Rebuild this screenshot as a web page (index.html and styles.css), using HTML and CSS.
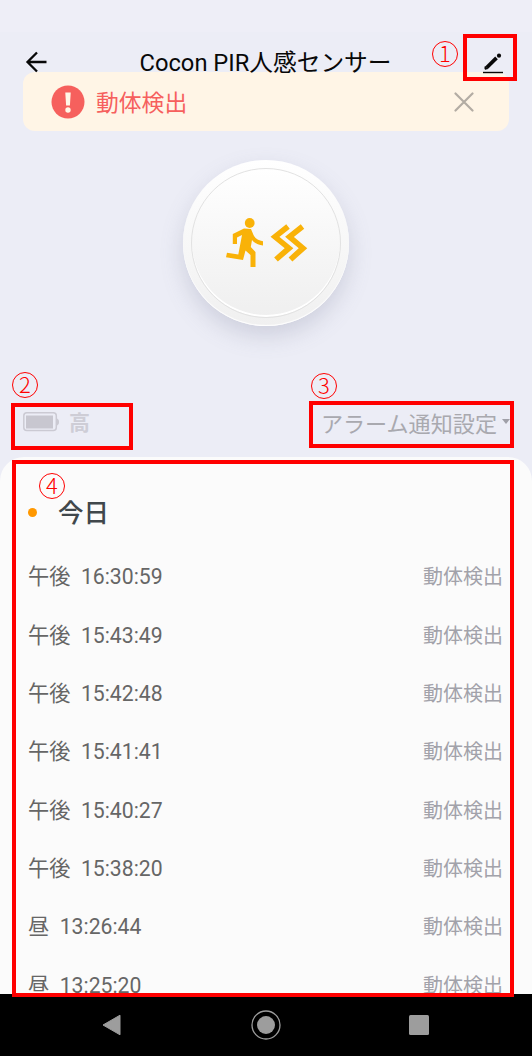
FILE: index.html
```html
<!DOCTYPE html>
<html lang="ja">
<head>
<meta charset="utf-8">
<title>Cocon PIR人感センサー</title>
<link rel="stylesheet" href="styles.css">
</head>
<body>
<div class="screen">
  <div class="status-bar"></div>
  <header class="header">
    <svg class="back" width="22" height="22" viewBox="0 0 22 22"><path d="M21.500 11H2.500M12 1.500L2.500 11l9.500 9.500" fill="none" stroke="#080808" stroke-width="2.300"/></svg>
    <h1 class="title">Cocon PIR人感センサー</h1>
    <svg class="edit" width="22" height="22" viewBox="0 0 22 22"><path d="M4.800 15.500L14.500 5.800" stroke="#080808" stroke-width="3.800"/><path d="M3 17.200v-2.700l2.700 2.200z" fill="#080808" stroke="#080808"/><circle cx="17" cy="3.700" r="2.100" fill="#080808"/><path d="M1 20.500h20" stroke="#080808" stroke-width="1.400"/></svg>
  </header>
  <section class="banner">
    <svg width="34" height="34" viewBox="0 0 34 34"><circle cx="17" cy="17" r="16.500" fill="#f6605d"/><path d="M14.300 7.500h5.400l-.8 13h-3.800z" fill="#fff6e7"/><circle cx="17" cy="25" r="2.700" fill="#fff6e7"/></svg>
    <span class="banner-text">動体検出</span>
    <svg class="close" width="20" height="20" viewBox="0 0 20 20"><path d="M1.500 1.500l17 17M18.500 1.500l-17 17" stroke="#b3aca3" stroke-width="2.200" stroke-linecap="round"/></svg>
  </section>
  <section class="sensor">
    <div class="dial">
      <div class="dial-face">
        <svg width="84" height="52" viewBox="0 0 84 52" fill="none" stroke="#f9b208">
          <circle cx="25.700" cy="6" r="4.900" fill="#f9b208" stroke="none"/>
          <path d="M20 11.500l7 .5 2.500 6c1.500 3.500 5 5.500 9.500 6.200v4.200c-5-.5-8.500-2.300-11-5.500l-1.200 7.200 4.700 5V50h-5V38l-5-4.500-2.500 9.500-17-2.800 1-4.500 11.300 1.800 3.700-19.500-5 2.500v6.500H8.800v-10z" fill="#f9b208" stroke="none"/>
          <path d="M64 9.500L51 19.800 65 31.200 52 42.500M78.500 9.500L65.500 19.800 79 31.200 66.500 42.500" stroke-width="5.600"/>
        </svg>
      </div>
    </div>
  </section>
  <section class="info">
    <div class="battery">
      <svg width="36" height="20" viewBox="0 0 36 20"><rect x=".8" y=".8" width="32.500" height="17.800" rx="3" fill="none" stroke="#cbcad3" stroke-width="1.500"/><rect x="3" y="3.500" width="27" height="13" fill="#c8c7d0"/><path d="M34 7c2 0 2 6 0 6z" fill="#cbcad3" stroke="#cbcad3"/></svg>
      <span class="level">高</span>
    </div>
    <div class="alarm"><span>アラーム通知設定</span><i class="caret"></i></div>
  </section>
  <main class="sheet">
    <h2 class="day"><i class="dot"></i><span>今日</span></h2>
    <ul class="events">
      <li><span class="time">午後  16:30:59</span><span class="event">動体検出</span></li>
      <li><span class="time">午後  15:43:49</span><span class="event">動体検出</span></li>
      <li><span class="time">午後  15:42:48</span><span class="event">動体検出</span></li>
      <li><span class="time">午後  15:41:41</span><span class="event">動体検出</span></li>
      <li><span class="time">午後  15:40:27</span><span class="event">動体検出</span></li>
      <li><span class="time">午後  15:38:20</span><span class="event">動体検出</span></li>
      <li><span class="time">昼  13:26:44</span><span class="event">動体検出</span></li>
      <li><span class="time">昼  13:25:20</span><span class="event">動体検出</span></li>
    </ul>
  </main>
  <nav class="nav">
    <svg width="20" height="22" viewBox="0 0 20 22"><path d="M1 11L18 1.200v19.600z" fill="#9d9d9d" stroke="#9d9d9d" stroke-linejoin="round"/></svg>
    <svg width="30" height="30" viewBox="0 0 30 30"><circle cx="15" cy="15" r="14" fill="none" stroke="#9d9d9d" stroke-width="1.300"/><circle cx="15" cy="15" r="9" fill="#9d9d9d"/></svg>
    <svg width="20" height="20" viewBox="0 0 20 20"><rect width="20" height="20" rx="1.500" fill="#9d9d9d"/></svg>
  </nav>
  <div class="mark mark-edit"></div><span class="num num-edit">1</span>
  <div class="mark mark-battery"></div><span class="num num-battery">2</span>
  <div class="mark mark-alarm"></div><span class="num num-alarm">3</span>
  <div class="mark mark-log"></div><span class="num num-log">4</span>
</div>
</body>
</html>
```
FILE: styles.css
```css
* { box-sizing: border-box; margin: 0; padding: 0; }
body { font-family: Roboto, "Noto Sans CJK JP", sans-serif; }
svg { display: block; flex: none; }
.screen {
  position: relative;
  display: flex;
  flex-direction: column;
  width: 532px;
  height: 1056px;
  overflow: hidden;
  background: #ecedf6;
}
.status-bar { height: 32px; background: #eeeef7; flex: none; }
.header {
  display: flex;
  align-items: center;
  justify-content: space-between;
  height: 40px;
  padding: 19px 28px 0 25px;
  flex: none;
}
.header .edit { margin-top: 3px; }
.title {
  padding: 2px 0 0 2px;
  font-size: 23.700px;
  font-weight: 400;
  line-height: 30px;
  color: #080808;
  z-index: 1;
}
.header svg { z-index: 1; }
.banner {
  display: flex;
  align-items: center;
  height: 59px;
  margin: 0 23px;
  padding: 0 35px 0 28px;
  border-radius: 12px;
  background: #fff5e6;
  flex: none;
}
.banner-text { padding-top: 4px; margin-left: 11px; font-size: 22.8px; line-height: 30px; color: #f6605d; }
.close { margin-left: auto; }
.sensor { display: flex; justify-content: center; height: 263px; padding-top: 29px; flex: none; }
.dial {
  width: 166px;
  height: 166px;
  padding: 8px;
  border-radius: 50%;
  background: linear-gradient(#fff, #f0f0f0);
  box-shadow: 0 10px 22px rgba(120, 122, 150, .25), inset 0 -1px 1px #fff;
}
.dial-face {
  display: flex;
  align-items: center;
  justify-content: center;
  height: 150px;
  border: 1px solid #e2e2e2;
  border-radius: 50%;
  background: linear-gradient(#fff, #efefef);
  box-shadow: inset 0 -2px 0 #fff;
}
.info {
  display: flex;
  align-items: center;
  justify-content: space-between;
  height: 56px;
  padding: 0 22px 0 23px;
  flex: none;
}
.battery { display: flex; align-items: center; gap: 10px; }
.level { padding-top: 1px; font-size: 21px; font-weight: 700; line-height: 28px; color: #cecdd6; }
.alarm { display: flex; align-items: center; gap: 5px; padding-top: 3px; font-size: 22.100px; line-height: 30px; color: #a9a9af; }
.caret { margin: -4px 0 0 0; border: 4px solid transparent; border-top: 5px solid #a0a0a8; border-bottom: 0; }
.sheet {
  height: 537px;
  padding: 37px 29px 0 28px;
  margin-top: 7px;
  border-radius: 24px 24px 0 0;
  background: #fbfbfb;
  overflow: hidden;
  flex: none;
}
.day {
  display: flex;
  align-items: center;
  gap: 21px;
  height: 36px;
  font-size: 25.500px;
  font-weight: 500;
  line-height: 36px;
  color: #40474b;
}
.day span { padding-top: 2px; }
.dot { width: 9px; height: 9px; border-radius: 50%; background: #ff9800; }
.events { list-style: none; padding-top: 18px; }
.events li { display: flex; align-items: center; justify-content: space-between; height: 58.350px; }
.time { font-size: 21.200px; line-height: 30px; white-space: pre; color: #666; }
.event { font-size: 20px; line-height: 30px; color: #a2a2aa; }
.nav {
  display: flex;
  align-items: center;
  justify-content: space-between;
  height: 62px;
  padding: 0 103px 0 102px;
  background: #000;
  flex: none;
}
.mark { position: absolute; border: 4px solid #f00; }
.mark-edit { left: 463px; top: 34px; width: 54px; height: 47px; }
.mark-battery { left: 11px; top: 403px; width: 122px; height: 47px; }
.mark-alarm { left: 309px; top: 401px; width: 205px; height: 47px; }
.mark-log { left: 12px; top: 460px; width: 502px; height: 537px; }
.num {
  position: absolute;
  width: 26px;
  height: 26px;
  border: 1px solid #f00;
  border-radius: 50%;
  font-family: "Noto Sans CJK JP", sans-serif;
  font-size: 22px;
  font-weight: 300;
  line-height: 21px;
  text-align: center;
  color: #f00;
}
.num-edit { left: 432px; top: 41px; }
.num-battery { left: 12px; top: 372px; }
.num-alarm { left: 311px; top: 373px; }
.num-log { left: 39px; top: 473px; }
```
